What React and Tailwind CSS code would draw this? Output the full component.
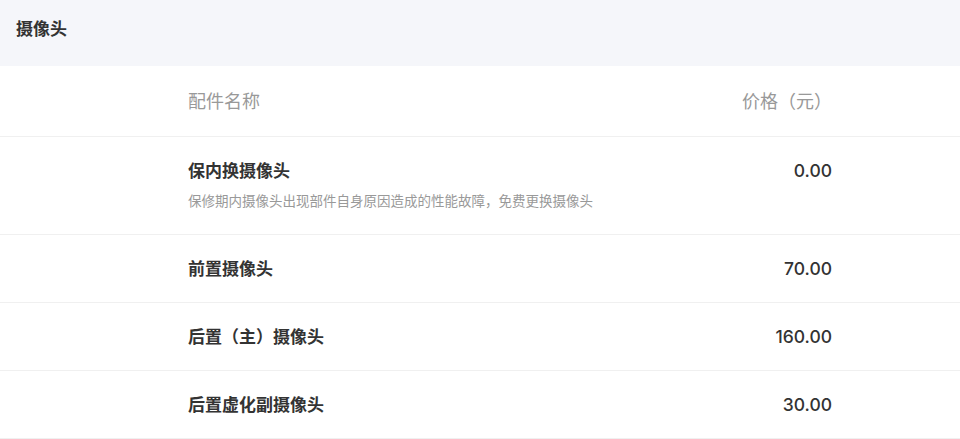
const rows = [
  { name: "保内换摄像头", desc: "保修期内摄像头出现部件自身原因造成的性能故障，免费更换摄像头", price: "0.00" },
  { name: "前置摄像头", price: "70.00" },
  { name: "后置（主）摄像头", price: "160.00" },
  { name: "后置虚化副摄像头", price: "30.00" },
];

export default function App() {
  return (
    <div
      className="w-[960px] bg-white text-[#333]"
      style={{ fontFamily: "Inter, 'Noto Sans CJK SC', sans-serif" }}
    >
      {/* Section title */}
      <div className="h-[66px] bg-[#f5f6fa] px-4 pt-[17px]">
        <h2 className="text-[17px] leading-[24px] font-semibold text-[#333]">摄像头</h2>
      </div>

      {/* Table header */}
      <div className="h-[71px] flex items-center pl-[188px] pr-[128px] border-b border-[#f0f0f0]">
        <span className="flex-1 text-[18px] text-[#999]">配件名称</span>
        <span className="text-[18px] text-[#999]">价格（元）</span>
      </div>

      {/* Rows */}
      {rows.map((row, i) =>
        row.desc ? (
          <div
            key={i}
            className="h-[98px] flex items-start pl-[188px] pr-[128px] pt-[22px] border-b border-[#f0f0f0]"
          >
            <div className="flex-1">
              <div className="text-[17px] font-semibold leading-[24px]">{row.name}</div>
              <div className="mt-[8px] text-[13.5px] text-[#999] leading-[20px]">{row.desc}</div>
            </div>
            <div className="text-[17.5px] font-medium leading-[24px]">{row.price}</div>
          </div>
        ) : (
          <div
            key={i}
            className="h-[68px] flex items-center pl-[188px] pr-[128px] border-b border-[#f0f0f0]"
          >
            <div className="flex-1 text-[17px] font-semibold leading-[24px]">{row.name}</div>
            <div className="text-[17.5px] font-medium leading-[24px]">{row.price}</div>
          </div>
        )
      )}
    </div>
  );
}
